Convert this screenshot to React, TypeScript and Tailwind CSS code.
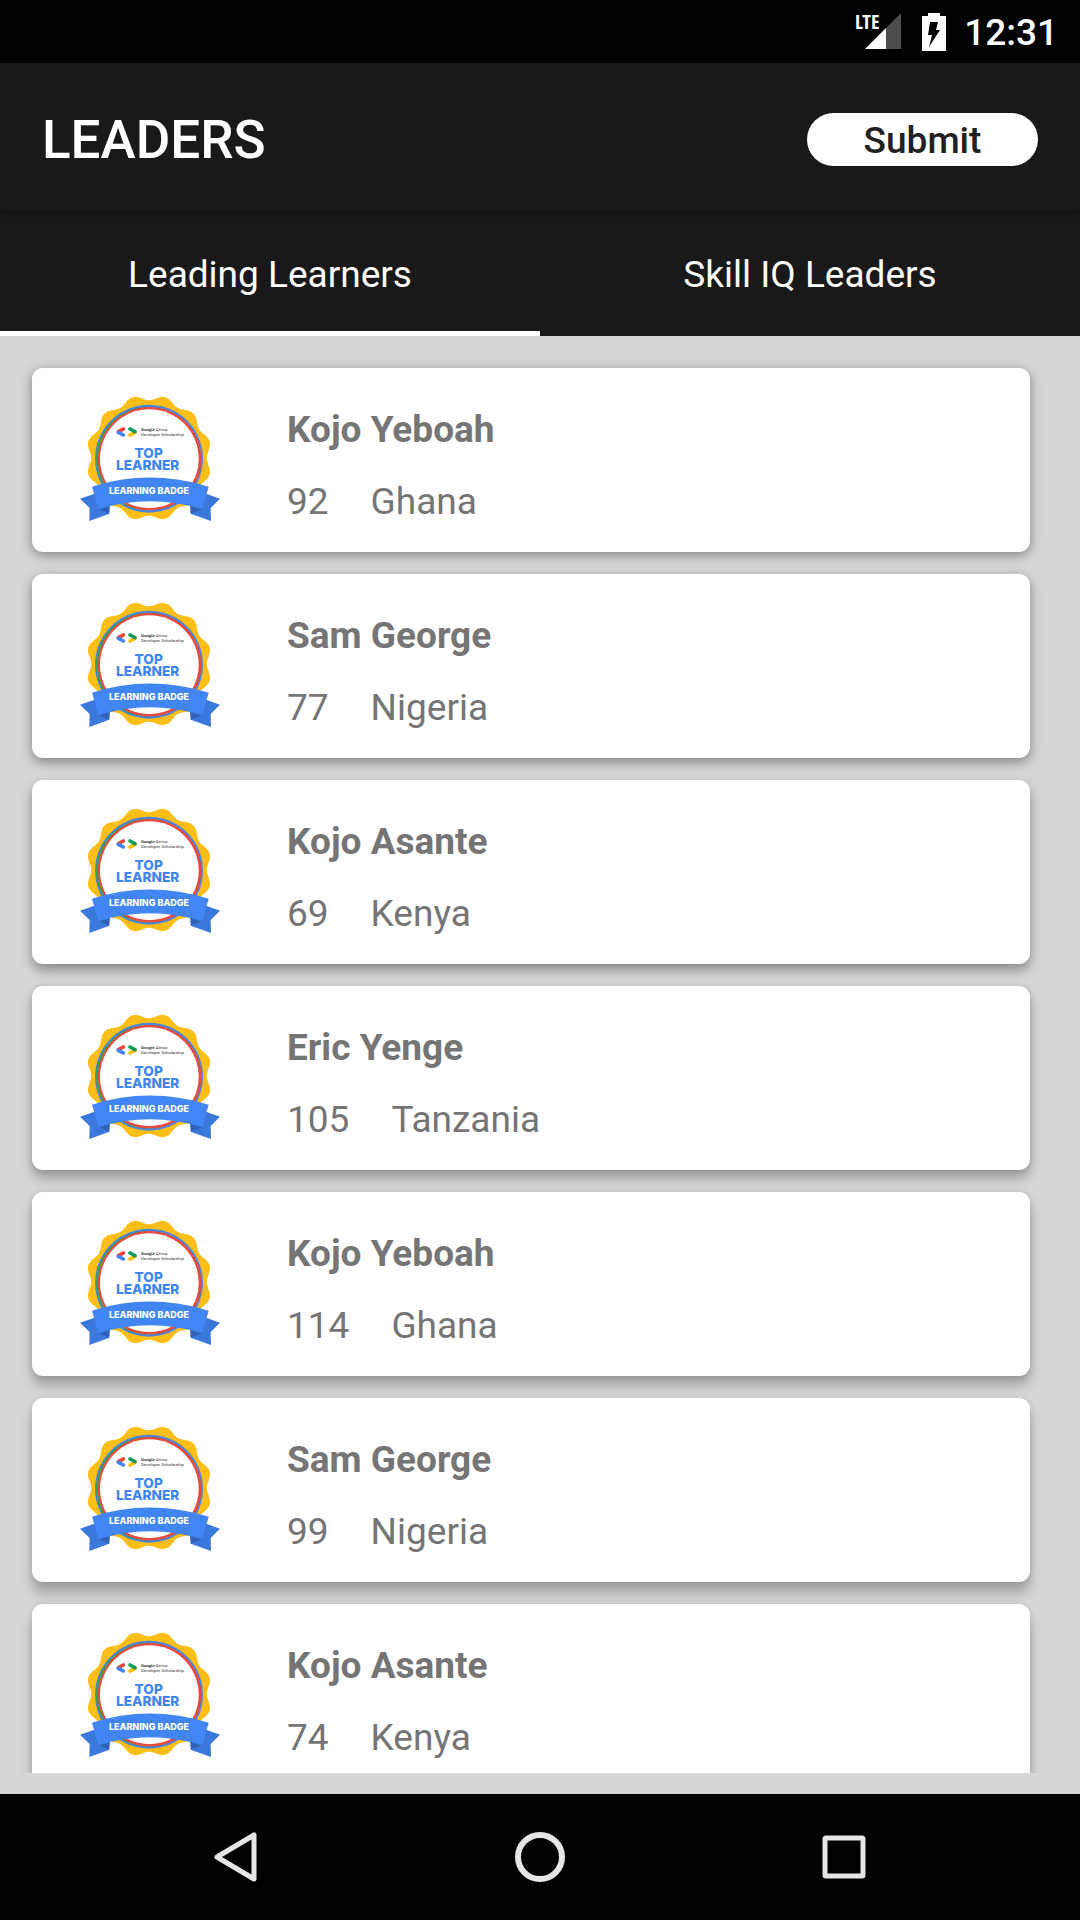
const leaders = [
  { name: "Kojo Yeboah", hours: 92, country: "Ghana", shadow: "shadow-[0_3px_12px_rgba(0,0,0,0.4)]" },
  { name: "Sam George", hours: 77, country: "Nigeria", shadow: "shadow-[0_4px_12px_rgba(0,0,0,0.4)]" },
  { name: "Kojo Asante", hours: 69, country: "Kenya", shadow: "shadow-[0_6px_12px_rgba(0,0,0,0.36)]" },
  { name: "Eric Yenge", hours: 105, country: "Tanzania", shadow: "shadow-[0_8px_12px_rgba(0,0,0,0.28),0_0_6px_rgba(0,0,0,0.1)]" },
  { name: "Kojo Yeboah", hours: 114, country: "Ghana", shadow: "shadow-[0_9px_12px_rgba(0,0,0,0.26),0_0_6px_rgba(0,0,0,0.1)]" },
  { name: "Sam George", hours: 99, country: "Nigeria", shadow: "shadow-[0_11px_12px_rgba(0,0,0,0.24),0_0_6px_rgba(0,0,0,0.1)]" },
  { name: "Kojo Asante", hours: 74, country: "Kenya", shadow: "shadow-[0_12px_12px_rgba(0,0,0,0.24),0_0_6px_rgba(0,0,0,0.1)]" },
];

// Twelve-lobed rosette edge, sampled every three degrees.
const rosette =
  Array.from({ length: 120 }, (_, i) => {
    const a = (i * Math.PI) / 60;
    const r = 181 - 8 * Math.cos(12 * a);
    return `${i ? "L" : "M"}${(267 + r * Math.sin(a)).toFixed(1)} ${(234 - r * Math.cos(a)).toFixed(1)}`;
  }).join(" ") + "Z";

function Badge() {
  return (
    <svg viewBox="60 48 420 375" className="h-[125px] w-[140px] shrink-0" role="img" aria-label="Top learner badge">
      <path d={rosette} fill="#fdbf17" />
      <circle cx="267" cy="236" r="162" fill="#4a86dc" />
      <circle cx="263" cy="236" r="155" fill="#3a9f5c" />
      <circle cx="269" cy="236" r="155" fill="#ea4a3c" />
      <circle cx="268" cy="236" r="148" fill="#fff" />
      <g fill="none" strokeWidth="11" strokeLinecap="round">
        <path d="M190 147L175 155" stroke="#ea4335" />
        <path d="M175 157L190 165" stroke="#4285f4" />
        <path d="M210 165L225 157" stroke="#fbbc04" />
        <path d="M210 147L225 155" stroke="#0f9d58" />
      </g>
      <text fill="#333" fontFamily="Roboto, sans-serif" fontSize="13">
        <tspan x="243" y="152" fontWeight="600">Google</tspan>
        <tspan> Africa</tspan>
        <tspan x="243" y="167">Developer Scholarship</tspan>
      </text>
      <text fill="#4285f4" fontFamily="Inter, sans-serif" fontWeight="800" fontSize="41" textAnchor="middle">
        <tspan x="266" y="235">TOP</tspan>
        <tspan x="263" y="270">LEARNER</tspan>
      </text>
      <path d="M60 356L112 338L148 401L88 423L89 384Z" fill="#3b78dc" />
      <path d="M480 356L430 338L392 401L453 423L452 384Z" fill="#3b78dc" />
      <path d="M116 388L150 374L148 401Z" fill="#2f62b8" />
      <path d="M427 388L390 374L392 401Z" fill="#2f62b8" />
      <path d="M96 320Q267 265 446 320L427 388Q267 340 116 388Z" fill="#4285f4" />
      <text x="267" y="343" fill="#fff" fontFamily="Inter, sans-serif" fontWeight="800" fontSize="27" textAnchor="middle">LEARNING BADGE</text>
    </svg>
  );
}

function StatusBar() {
  return (
    <div className="flex h-[63px] shrink-0 items-center justify-end bg-black pr-[22px] text-white">
      <svg viewBox="0 -4 50 51" className="mr-[17px] h-[51px] w-[50px]" role="img" aria-label="LTE signal">
        <path d="M46 3V39H10Z" fill="#4d4d4d" />
        <path d="M31 18V39H10Z" fill="#fff" />
        <text x="0" y="19" fill="#fff" fontFamily="'Liberation Sans Narrow', 'Open Sans Condensed', Roboto, sans-serif" fontWeight="700" fontSize="20">LTE</text>
      </svg>
      <svg viewBox="0 0 24 38" className="mr-[18px] h-[38px] w-6" role="img" aria-label="Battery charging">
        <path d="M6 0H18V3H24V38H0V3H6Z" fill="#fff" />
        <path d="M8 9H16L14 17H18L7 34L10 22H6Z" fill="#000" />
      </svg>
      <span className="pt-[3px] text-[37px] leading-[44px] font-medium">12:31</span>
    </div>
  );
}

function NavBar() {
  return (
    <nav className="flex h-[126px] shrink-0 items-center justify-center gap-[204px] bg-black">
      <button aria-label="Back" className="flex w-[100px] justify-center">
        <svg viewBox="0 0 50 56" className="h-14 w-[50px]" fill="none" stroke="#e6e6e6" strokeWidth="5" strokeLinejoin="round">
          <path d="M43 6V50L6 28Z" />
        </svg>
      </button>
      <button aria-label="Home" className="flex w-[100px] justify-center">
        <svg viewBox="0 0 50 50" className="size-[50px]" fill="none" stroke="#e6e6e6" strokeWidth="6">
          <circle cx="25" cy="25" r="22" />
        </svg>
      </button>
      <button aria-label="Recent apps" className="flex w-[100px] justify-center">
        <svg viewBox="0 0 44 44" className="size-11" fill="none" stroke="#e6e6e6" strokeWidth="5">
          <rect x="3" y="3" width="38" height="38" rx="1" />
        </svg>
      </button>
    </nav>
  );
}

export default function App() {
  return (
    <div className="flex h-screen flex-col bg-[#d6d6d6] font-['Roboto',sans-serif]">
      <StatusBar />
      <header className="relative flex h-[147px] shrink-0 items-center justify-between bg-[#191919] px-[42px] pt-[6px] shadow-[0_3px_8px_rgba(0,0,0,0.3)]">
        <h1 className="text-[53px] leading-[64px] font-medium text-white">LEADERS</h1>
        <button className="h-[53px] w-[231px] rounded-full bg-white pt-[2px] text-[37px] leading-[51px] font-medium text-[#212121]">
          Submit
        </button>
      </header>
      <div role="tablist" className="grid h-[126px] shrink-0 grid-cols-2 bg-[#191919] text-[37px] leading-[44px] text-white">
        <button role="tab" aria-selected="true" className="border-b-[5px] border-white pt-2">
          Leading Learners
        </button>
        <button role="tab" aria-selected="false" className="border-b-[5px] border-transparent pt-2">
          Skill IQ Leaders
        </button>
      </div>
      <main className="mb-[21px] min-h-0 flex-1 overflow-hidden pt-8 pr-[50px] pl-8">
        <ul className="flex flex-col gap-[22px]">
          {leaders.map((l, i) => (
            <li key={i} className={`flex h-[184px] shrink-0 gap-[67px] rounded-[11px] bg-white pt-7 pl-12 ${l.shadow}`}>
              <Badge />
              <div className="flex flex-col gap-7 pt-3 text-[37px] leading-[44px] text-[#757575]">
                <h2 className="font-bold">{l.name}</h2>
                <p className="flex gap-[42px]">
                  <span>{l.hours}</span>
                  <span>{l.country}</span>
                </p>
              </div>
            </li>
          ))}
        </ul>
      </main>
      <NavBar />
    </div>
  );
}
